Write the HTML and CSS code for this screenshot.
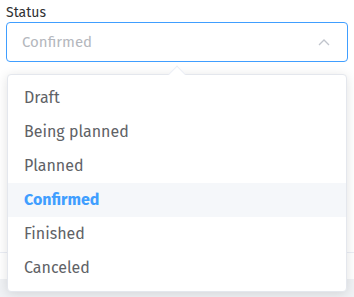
FILE: index.html
```html
<!DOCTYPE html>
<html lang="en">
<head>
  <meta charset="UTF-8" />
  <title>Status select</title>
  <link rel="stylesheet" href="styles.css">
</head>
<body>
  <div class="form">
    <div class="field">
      <label class="label">Status</label>
      <div class="select is-focus">
        <span class="select-value">Confirmed</span>
        <svg class="select-arrow" width="12" height="8" viewBox="0 0 12 8">
          <path d="M1 7 L6 2 L11 7" fill="none" stroke="#c0c4cc" stroke-width="1.3" />
        </svg>
      </div>
    </div>
    <div class="section"></div>
    <div class="footer"></div>
  </div>

  <div class="dropdown">
    <div class="dropdown-arrow"></div>
    <ul class="dropdown-list">
      <li class="dropdown-item">Draft</li>
      <li class="dropdown-item">Being planned</li>
      <li class="dropdown-item">Planned</li>
      <li class="dropdown-item selected">Confirmed</li>
      <li class="dropdown-item">Finished</li>
      <li class="dropdown-item">Canceled</li>
    </ul>
  </div>
</body>
</html>
```

FILE: styles.css
```css
* {
  box-sizing: border-box;
  font-family: 'Fira Sans', 'Lato', sans-serif;
}
body {
  margin: 0;
  background: #fff;
  color: #606266;
}
.field {
  padding: 3px 6px 0;
}
.label {
  display: block;
  font-size: 14px;
  line-height: 19px;
  color: #303133;
}
.select {
  height: 40px;
  border: 1px solid #dcdfe6;
  border-radius: 4px;
  padding: 0 15px;
  display: flex;
  align-items: center;
  justify-content: space-between;
}
.select.is-focus {
  border-color: #409eff;
}
.select-value {
  font-size: 15px;
  color: #b4b7bd;
}
.select-arrow {
  margin-right: 2px;
}
.section {
  height: 191px;
  border-bottom: 1px solid #ebeef5;
}
.footer {
  margin-top: 26px;
  height: 20px;
  background: #f0f2f5;
}
.dropdown {
  position: absolute;
  top: 74px;
  left: 7px;
  width: 340px;
  background: #fff;
  border: 1px solid #e4e7ed;
  border-radius: 4px;
  box-shadow: 0 2px 12px rgba(0, 0, 0, 0.12);
}
.dropdown-arrow {
  position: absolute;
  top: -7px;
  left: 163px;
  width: 12px;
  height: 12px;
  background: #fff;
  border-left: 1px solid #ebeef5;
  border-top: 1px solid #ebeef5;
  transform: rotate(45deg);
}
.dropdown-list {
  list-style: none;
  margin: 0;
  padding: 6px 0;
  position: relative;
}
.dropdown-item {
  height: 34px;
  line-height: 34px;
  padding: 0 16px;
  font-size: 16px;
  color: #606266;
}
.dropdown-item.selected {
  background: #f5f7fa;
  color: #409eff;
  font-weight: bold;
}
```
